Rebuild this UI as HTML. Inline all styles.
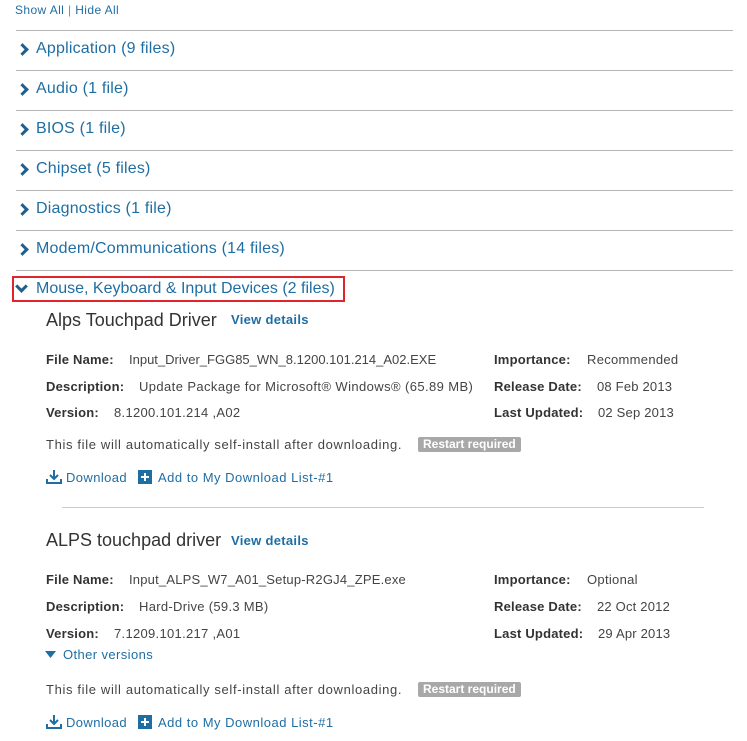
<!DOCTYPE html>
<html><head><meta charset="utf-8"><style>
body{margin:0;width:747px;height:741px;background:#fff;position:relative;overflow:hidden;font-family:"Liberation Sans","DejaVu Sans",sans-serif;color:#444}
.a{position:absolute;white-space:nowrap;line-height:16px}
.l{color:#1f6ea3}
.hr{position:absolute;left:16px;width:717px;height:1px;background:#b5b5b5}
.h{position:absolute;left:36px;font-size:16px;color:#1f6ea3;line-height:18px;white-space:nowrap;letter-spacing:0.2px}
.chev{position:absolute;left:18px;width:6px;height:6px;border-right:3px solid #1f5f8e;border-top:3px solid #1f5f8e;transform:rotate(45deg)}
.b{font-weight:bold;color:#333;font-size:13px;letter-spacing:0.2px}
.t{font-size:13px}
.badge{position:absolute;background:#a8a8a8;color:#fff;font-weight:bold;font-size:12px;line-height:15px;padding:0 5px;border-radius:2px}
.plus{position:absolute;width:14px;height:14px;background:#1f6ea3}
.plus:before{content:"";position:absolute;left:3px;top:6px;width:8px;height:2px;background:#fff}
.plus:after{content:"";position:absolute;left:6px;top:3px;width:2px;height:8px;background:#fff}
.ttl{position:absolute;left:46px;font-size:18px;color:#333;line-height:20px;white-space:nowrap}
</style></head><body>
<div class="a l" style="left:15px;top:2px;font-size:12px;letter-spacing:0.4px">Show All <span style="color:#888">|</span> Hide All</div>

<div class="hr" style="top:30px"></div>
<div class="chev" style="top:45px"></div><div class="h" style="top:40px">Application (9 files)</div>
<div class="hr" style="top:70px"></div>
<div class="chev" style="top:85px"></div><div class="h" style="top:80px">Audio (1 file)</div>
<div class="hr" style="top:110px"></div>
<div class="chev" style="top:125px"></div><div class="h" style="top:120px">BIOS (1 file)</div>
<div class="hr" style="top:150px"></div>
<div class="chev" style="top:165px"></div><div class="h" style="top:160px">Chipset (5 files)</div>
<div class="hr" style="top:190px"></div>
<div class="chev" style="top:205px"></div><div class="h" style="top:200px">Diagnostics (1 file)</div>
<div class="hr" style="top:230px"></div>
<div class="chev" style="top:245px"></div><div class="h" style="top:240px">Modem/Communications (14 files)</div>
<div class="hr" style="top:270px"></div>
<div style="position:absolute;left:12px;top:276px;width:329px;height:22px;border:2px solid #e0242b"></div>
<div class="chev" style="top:282px;left:17px;transform:rotate(135deg)"></div><div class="h" style="top:280px;letter-spacing:0">Mouse, Keyboard &amp; Input Devices (2 files)</div>

<div class="ttl" style="top:310px">Alps Touchpad Driver</div>
<div class="a l" style="left:231px;top:312px;font-size:13px;font-weight:bold;letter-spacing:0.3px">View details</div>
<div class="a" style="left:46px;top:352px"><span class="b">File Name:</span></div><div class="a t" style="left:129px;top:352px">Input_Driver_FGG85_WN_8.1200.101.214_A02.EXE</div>
<div class="a" style="left:46px;top:379px"><span class="b">Description:</span></div><div class="a t" style="left:139px;top:379px;letter-spacing:0.4px">Update Package for Microsoft® Windows® (65.89 MB)</div>
<div class="a" style="left:46px;top:405px"><span class="b">Version:</span></div><div class="a t" style="left:114px;top:405px;letter-spacing:0.3px">8.1200.101.214 ,A02</div>
<div class="a" style="left:494px;top:352px"><span class="b">Importance:</span></div><div class="a t" style="left:587px;top:352px;letter-spacing:0.3px">Recommended</div>
<div class="a" style="left:494px;top:379px"><span class="b">Release Date:</span></div><div class="a t" style="left:597px;top:379px;letter-spacing:0.2px">08 Feb 2013</div>
<div class="a" style="left:494px;top:405px"><span class="b">Last Updated:</span></div><div class="a t" style="left:598px;top:405px;letter-spacing:0.2px">02 Sep 2013</div>
<div class="a t" style="left:46px;top:437px;letter-spacing:0.65px">This file will automatically self-install after downloading.</div>
<div class="badge" style="left:418px;top:437px">Restart required</div>
<svg style="position:absolute;left:46px;top:469px" width="16" height="15"><path d="M8 1v9M4 6l4 4 4-4M1 10v4h14v-4" stroke="#1f6ea3" stroke-width="2" fill="none"/></svg>
<div class="a l t" style="left:66px;top:470px;letter-spacing:0.4px">Download</div>
<div class="plus" style="left:138px;top:470px"></div>
<div class="a l t" style="left:158px;top:470px;letter-spacing:0.5px">Add to My Download List-#1</div>

<div style="position:absolute;left:62px;top:507px;width:642px;height:1px;background:#ccc"></div>

<div class="ttl" style="top:530px">ALPS touchpad driver</div>
<div class="a l" style="left:231px;top:533px;font-size:13px;font-weight:bold;letter-spacing:0.3px">View details</div>
<div class="a" style="left:46px;top:572px"><span class="b">File Name:</span></div><div class="a t" style="left:129px;top:572px;letter-spacing:0.2px">Input_ALPS_W7_A01_Setup-R2GJ4_ZPE.exe</div>
<div class="a" style="left:46px;top:599px"><span class="b">Description:</span></div><div class="a t" style="left:139px;top:599px;letter-spacing:0.3px">Hard-Drive (59.3 MB)</div>
<div class="a" style="left:46px;top:626px"><span class="b">Version:</span></div><div class="a t" style="left:114px;top:626px;letter-spacing:0.3px">7.1209.101.217 ,A01</div>
<div class="a" style="left:494px;top:572px"><span class="b">Importance:</span></div><div class="a t" style="left:587px;top:572px;letter-spacing:0.3px">Optional</div>
<div class="a" style="left:494px;top:599px"><span class="b">Release Date:</span></div><div class="a t" style="left:597px;top:599px;letter-spacing:0.2px">22 Oct 2012</div>
<div class="a" style="left:494px;top:626px"><span class="b">Last Updated:</span></div><div class="a t" style="left:598px;top:626px;letter-spacing:0.2px">29 Apr 2013</div>
<svg style="position:absolute;left:45px;top:651px" width="12" height="8"><path d="M0 0h11L5.5 7z" fill="#1f6ea3"/></svg>
<div class="a l t" style="left:63px;top:647px;letter-spacing:0.4px">Other versions</div>
<div class="a t" style="left:46px;top:682px;letter-spacing:0.65px">This file will automatically self-install after downloading.</div>
<div class="badge" style="left:418px;top:682px">Restart required</div>
<svg style="position:absolute;left:46px;top:714px" width="16" height="15"><path d="M8 1v9M4 6l4 4 4-4M1 10v4h14v-4" stroke="#1f6ea3" stroke-width="2" fill="none"/></svg>
<div class="a l t" style="left:66px;top:715px;letter-spacing:0.4px">Download</div>
<div class="plus" style="left:138px;top:715px"></div>
<div class="a l t" style="left:158px;top:715px;letter-spacing:0.5px">Add to My Download List-#1</div>
</body></html>
